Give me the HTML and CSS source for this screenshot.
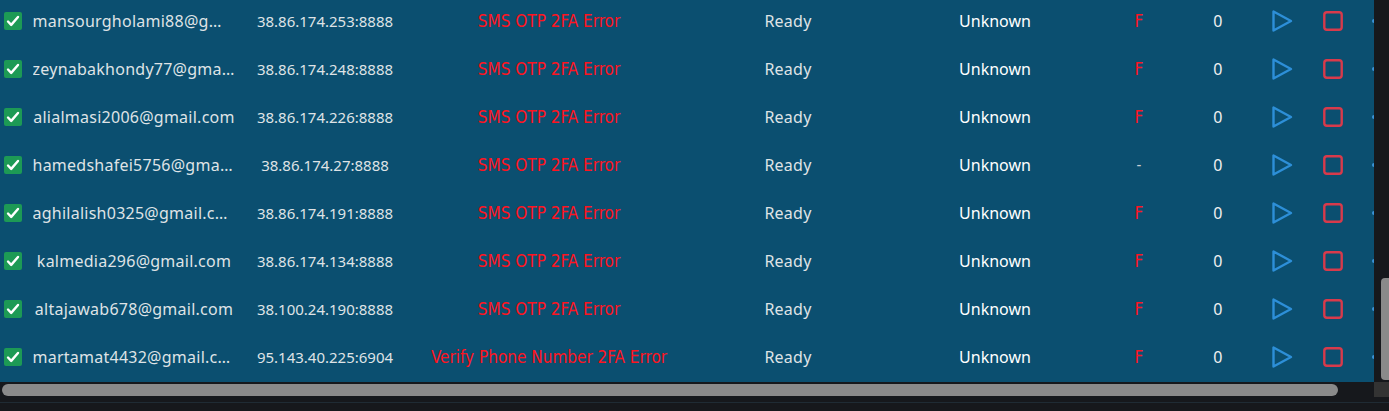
FILE: index.html
```html
<!DOCTYPE html>
<html>
<head>
<meta charset="utf-8">
<link rel="stylesheet" href="styles.css">
</head>
<body>
<div class="app">
  <div class="main">
    <div class="viewport">
      <div class="rows">
        <div class="row"><div class="c chk"><span class="box"><svg viewBox="0 0 18 18"><path d="M4 9.5l3.2 3.4L14 5" /></svg></span></div><div class="c email"><span>mansourgholami88@gmail.com</span></div><div class="c ip">38.86.174.253:8888</div><div class="c err">SMS OTP 2FA Error</div><div class="c st">Ready</div><div class="c unk">Unknown</div><div class="c flag">F</div><div class="c num">0</div><div class="c act"><svg class="play" viewBox="0 0 22 24"><path d="M2.5 2.5v19l17.5-9.5z"/></svg></div><div class="c act2"><svg class="stop" viewBox="0 0 22 22"><rect x="2.3" y="2.3" width="17.4" height="17.4" rx="2.5"/></svg></div><div class="c more"><span class="dot"></span></div></div>
        <div class="row"><div class="c chk"><span class="box"><svg viewBox="0 0 18 18"><path d="M4 9.5l3.2 3.4L14 5" /></svg></span></div><div class="c email"><span>zeynabakhondy77@gmail.com</span></div><div class="c ip">38.86.174.248:8888</div><div class="c err">SMS OTP 2FA Error</div><div class="c st">Ready</div><div class="c unk">Unknown</div><div class="c flag">F</div><div class="c num">0</div><div class="c act"><svg class="play" viewBox="0 0 22 24"><path d="M2.5 2.5v19l17.5-9.5z"/></svg></div><div class="c act2"><svg class="stop" viewBox="0 0 22 22"><rect x="2.3" y="2.3" width="17.4" height="17.4" rx="2.5"/></svg></div><div class="c more"><span class="dot"></span></div></div>
        <div class="row"><div class="c chk"><span class="box"><svg viewBox="0 0 18 18"><path d="M4 9.5l3.2 3.4L14 5" /></svg></span></div><div class="c email"><span>alialmasi2006@gmail.com</span></div><div class="c ip">38.86.174.226:8888</div><div class="c err">SMS OTP 2FA Error</div><div class="c st">Ready</div><div class="c unk">Unknown</div><div class="c flag">F</div><div class="c num">0</div><div class="c act"><svg class="play" viewBox="0 0 22 24"><path d="M2.5 2.5v19l17.5-9.5z"/></svg></div><div class="c act2"><svg class="stop" viewBox="0 0 22 22"><rect x="2.3" y="2.3" width="17.4" height="17.4" rx="2.5"/></svg></div><div class="c more"><span class="dot"></span></div></div>
        <div class="row"><div class="c chk"><span class="box"><svg viewBox="0 0 18 18"><path d="M4 9.5l3.2 3.4L14 5" /></svg></span></div><div class="c email"><span>hamedshafei5756@gmail.com</span></div><div class="c ip">38.86.174.27:8888</div><div class="c err">SMS OTP 2FA Error</div><div class="c st">Ready</div><div class="c unk">Unknown</div><div class="c flag dash">-</div><div class="c num">0</div><div class="c act"><svg class="play" viewBox="0 0 22 24"><path d="M2.5 2.5v19l17.5-9.5z"/></svg></div><div class="c act2"><svg class="stop" viewBox="0 0 22 22"><rect x="2.3" y="2.3" width="17.4" height="17.4" rx="2.5"/></svg></div><div class="c more"><span class="dot"></span></div></div>
        <div class="row"><div class="c chk"><span class="box"><svg viewBox="0 0 18 18"><path d="M4 9.5l3.2 3.4L14 5" /></svg></span></div><div class="c email"><span>aghilalish0325@gmail.com</span></div><div class="c ip">38.86.174.191:8888</div><div class="c err">SMS OTP 2FA Error</div><div class="c st">Ready</div><div class="c unk">Unknown</div><div class="c flag">F</div><div class="c num">0</div><div class="c act"><svg class="play" viewBox="0 0 22 24"><path d="M2.5 2.5v19l17.5-9.5z"/></svg></div><div class="c act2"><svg class="stop" viewBox="0 0 22 22"><rect x="2.3" y="2.3" width="17.4" height="17.4" rx="2.5"/></svg></div><div class="c more"><span class="dot"></span></div></div>
        <div class="row"><div class="c chk"><span class="box"><svg viewBox="0 0 18 18"><path d="M4 9.5l3.2 3.4L14 5" /></svg></span></div><div class="c email"><span>kalmedia296@gmail.com</span></div><div class="c ip">38.86.174.134:8888</div><div class="c err">SMS OTP 2FA Error</div><div class="c st">Ready</div><div class="c unk">Unknown</div><div class="c flag">F</div><div class="c num">0</div><div class="c act"><svg class="play" viewBox="0 0 22 24"><path d="M2.5 2.5v19l17.5-9.5z"/></svg></div><div class="c act2"><svg class="stop" viewBox="0 0 22 22"><rect x="2.3" y="2.3" width="17.4" height="17.4" rx="2.5"/></svg></div><div class="c more"><span class="dot"></span></div></div>
        <div class="row"><div class="c chk"><span class="box"><svg viewBox="0 0 18 18"><path d="M4 9.5l3.2 3.4L14 5" /></svg></span></div><div class="c email"><span>altajawab678@gmail.com</span></div><div class="c ip">38.100.24.190:8888</div><div class="c err">SMS OTP 2FA Error</div><div class="c st">Ready</div><div class="c unk">Unknown</div><div class="c flag">F</div><div class="c num">0</div><div class="c act"><svg class="play" viewBox="0 0 22 24"><path d="M2.5 2.5v19l17.5-9.5z"/></svg></div><div class="c act2"><svg class="stop" viewBox="0 0 22 22"><rect x="2.3" y="2.3" width="17.4" height="17.4" rx="2.5"/></svg></div><div class="c more"><span class="dot"></span></div></div>
        <div class="row"><div class="c chk"><span class="box"><svg viewBox="0 0 18 18"><path d="M4 9.5l3.2 3.4L14 5" /></svg></span></div><div class="c email"><span>martamat4432@gmail.com</span></div><div class="c ip">95.143.40.225:6904</div><div class="c err">Verify Phone Number 2FA Error</div><div class="c st">Ready</div><div class="c unk">Unknown</div><div class="c flag">F</div><div class="c num">0</div><div class="c act"><svg class="play" viewBox="0 0 22 24"><path d="M2.5 2.5v19l17.5-9.5z"/></svg></div><div class="c act2"><svg class="stop" viewBox="0 0 22 22"><rect x="2.3" y="2.3" width="17.4" height="17.4" rx="2.5"/></svg></div><div class="c more"><span class="dot"></span></div></div>
      </div>
    </div>
    <div class="vscroll"><div class="vthumb"></div></div>
  </div>
  <div class="hbar">
    <div class="htrack"><div class="hthumb"></div></div>
    <div class="corner"></div>
  </div>
  <div class="footer"></div>
</div>
</body>
</html>
```
FILE: styles.css
```css
* { box-sizing: border-box; }
html, body { margin: 0; padding: 0; background: #16181c; }
body { width: 1389px; height: 411px; overflow: hidden; font-family: "Noto Sans", "Open Sans", sans-serif; }
.app { display: flex; flex-direction: column; height: 411px; }
.main { display: flex; height: 382px; flex-shrink: 0; }
.viewport { width: 1374px; height: 382px; background: #0b4f70; overflow: hidden; flex-shrink: 0; }
.rows { margin-top: -3px; display: flex; flex-direction: column; }
.row { display: flex; height: 48px; align-items: center; font-size: 16px; letter-spacing: 0.25px; color: #dfe3e6; white-space: nowrap; flex-shrink: 0; }
.c { display: flex; align-items: center; justify-content: center; height: 100%; flex-shrink: 0; }
.chk { width: 26px; justify-content: flex-start; padding-left: 4px; }
.box { width: 18px; height: 18px; background: #1d9a55; border-radius: 2px; display: flex; }
.box svg { width: 18px; height: 18px; fill: none; stroke: #fff; stroke-width: 2.4; stroke-linecap: round; stroke-linejoin: round; }
.email { width: 216px; }
.email span { max-width: 203px; overflow: hidden; text-overflow: ellipsis; }
.ip { width: 166px; font-size: 15px; letter-spacing: 0; }
.err { width: 282px; color: #ff1420; font-family: "DejaVu Sans Condensed", "DejaVu Sans", sans-serif; font-size: 17px; letter-spacing: 0; }
.st { width: 196px; }
.unk { width: 218px; color: #fff; letter-spacing: 0; }
.flag { width: 70px; color: #ff1420; font-family: "DejaVu Sans Condensed", "DejaVu Sans", sans-serif; font-size: 17px; letter-spacing: 0; }
.flag.dash { color: #c9ced2; font-size: 15px; }
.num { width: 88px; color: #f0f0f0; }
.act { width: 40px; }
.act2 { width: 62px; }
.more { width: 40px; justify-content: flex-start; padding-left: 8px; }
.dot { width: 4px; height: 4px; border-radius: 50%; background: #3b94d8; }
.play { width: 22px; height: 24px; fill: none; stroke: #2d8fd8; stroke-width: 2.4; stroke-linejoin: round; }
.stop { width: 22px; height: 22px; fill: none; stroke: #d83a4b; stroke-width: 2.4; }
.vscroll { width: 15px; height: 382px; background: #16181c; display: flex; flex-direction: column; justify-content: flex-end; align-items: flex-end; padding-bottom: 2px; flex-shrink: 0; }
.vthumb { width: 8px; height: 102px; background: #8a8a8a; border-radius: 4px 0 0 4px; }
.hbar { display: flex; height: 16px; flex-shrink: 0; }
.htrack { width: 1374px; padding: 2px 0 2px 2px; background: #16181c; flex-shrink: 0; }
.hthumb { width: 1336px; height: 12px; background: #8a8a8a; border-radius: 6px; }
.corner { width: 15px; height: 15px; background: #333333; }
.footer { flex: 1; border-top: 4px solid #16181c; box-shadow: inset 0 1px 0 #1f2b34; background: #16181c; }
```
